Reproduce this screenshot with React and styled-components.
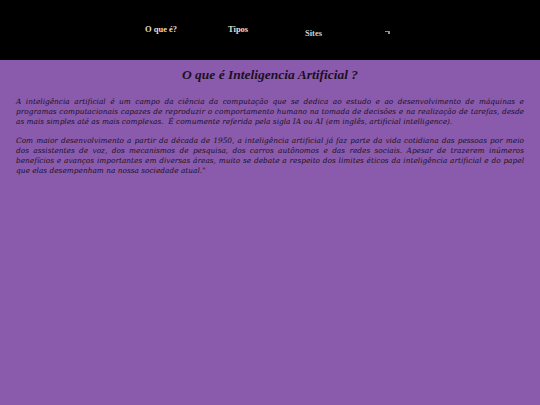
import React from "react";
import styled, { createGlobalStyle } from "styled-components";

const GlobalStyle = createGlobalStyle`
  html, body {
    margin: 0;
    padding: 0;
    background-color: #8a5bad;
  }
`

const Header = styled.header`
  height: 60px;
  background-color: #000;
  display: flex;
  padding-left: 145px;
  box-sizing: border-box;
`

const NavItem = styled.a`
  width: ${(p) => p.w}px;
  padding-top: ${(p) => p.top}px;
  font-family: "Liberation Serif", Georgia, serif;
  font-weight: bold;
  font-size: 8.5px;
  color: ${(p) => p.color || "#e8ddc9"};
  text-decoration: none;
  cursor: pointer;
`

const MenuIcon = styled.div`
  padding-top: 31px;
  svg {
    display: block;
  }
`

const Main = styled.main`
  padding: 0 16px;
  color: #1c1024;
  font-family: "DejaVu Serif", Georgia, serif;
  font-style: italic;
`

const Title = styled.h2`
  margin: 7px 0 14px;
  text-align: center;
  font-family: "Liberation Serif", Georgia, serif;
  font-size: 13.5px;
  font-weight: bold;
`

const Text = styled.p`
  margin: 0 0 9px;
  font-size: 7.4px;
  line-height: 10px;
  text-align: justify;
`

const App = () => {
  return (
    <div>
      <GlobalStyle />
      <Header>
        <NavItem w={83} top={24}>O que é?</NavItem>
        <NavItem w={77} top={24}>Tipos</NavItem>
        <NavItem w={80} top={28} color="#cfcfcf">Sites</NavItem>
        <MenuIcon>
          <svg width="5" height="4" viewBox="0 0 5 4">
            <rect x="0" y="0" width="5" height="1" fill="#8f8f8f" />
            <rect x="3" y="1" width="2" height="2" fill="#8f8f8f" />
          </svg>
        </MenuIcon>
      </Header>
      <Main>
        <Title>O que é Inteligencia Artificial ?</Title>
        <Text>
          A inteligência artificial é um campo da ciência da computação que se dedica ao estudo e ao
          desenvolvimento de máquinas e programas computacionais capazes de reproduzir o comportamento
          humano na tomada de decisões e na realização de tarefas, desde as mais simples até as mais
          complexas.&nbsp; É comumente referida pela sigla IA ou AI (em inglês, artificial intelligence).
        </Text>
        <Text>
          Com maior desenvolvimento a partir da década de 1950, a inteligência artificial já faz parte da
          vida cotidiana das pessoas por meio dos assistentes de voz, dos mecanismos de pesquisa, dos
          carros autônomos e das redes sociais. Apesar de trazerem inúmeros benefícios e avanços
          importantes em diversas áreas, muito se debate a respeito dos limites éticos da inteligência
          artificial e do papel que elas desempenham na nossa sociedade atual."
        </Text>
      </Main>
    </div>
  );
};

export default App;
